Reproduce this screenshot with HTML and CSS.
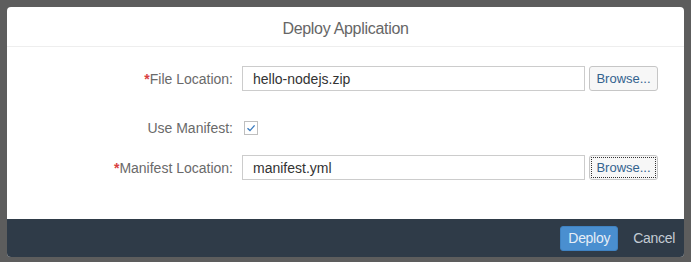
FILE: index.html
```html
<!DOCTYPE html>
<html>

<head>
  <link rel="stylesheet" href="styles.css">
</head>

<body>

  <div class="dialog">
    <div class="dialog-header">Deploy Application</div>

    <div class="dialog-body">
      <div class="form-row first">
        <label class="form-label" for="file-location"><span class="required">*</span>File Location:</label>
        <input class="form-input" id="file-location" type="text" value="hello-nodejs.zip">
        <button class="browse-button">Browse...</button>
      </div>

      <div class="form-row check-row">
        <label class="form-label" for="use-manifest">Use Manifest:</label>
        <span class="checkbox" id="use-manifest">
          <svg width="10" height="10" viewBox="0 0 10 10">
            <path d="M1.5 5.2 L4 7.6 L8.6 2.4" fill="none" stroke="#3b7cc0" stroke-width="1.4" />
          </svg>
        </span>
      </div>

      <div class="form-row">
        <label class="form-label" for="manifest-location"><span class="required">*</span>Manifest Location:</label>
        <input class="form-input" id="manifest-location" type="text" value="manifest.yml">
        <button class="browse-button focused">Browse...</button>
      </div>
    </div>

    <div class="dialog-footer">
      <button class="deploy-button">Deploy</button>
      <button class="cancel-button">Cancel</button>
    </div>
  </div>

</body>

</html>
```

FILE: styles.css
```css
body {
  margin: 0;
  background-color: #5d5d5d;
  font-family: "Liberation Sans", Arial, sans-serif;
}

.dialog {
  margin: 7px;
  width: 677px;
  height: 250px;
  background-color: white;
  border-radius: 4px;
  overflow: hidden;
  display: flex;
  flex-direction: column;
}

.dialog-header {
  height: 39px;
  line-height: 44px;
  text-align: center;
  font-size: 16px;
  letter-spacing: -0.3px;
  color: #666;
  border-bottom: 1px solid #eeeeee;
}

.dialog-body {
  flex: 1;
}

.form-row {
  display: flex;
  align-items: center;
  height: 25px;
  margin-top: 20px;
}

.form-row.first {
  margin-top: 19px;
}

.form-row.check-row {
  height: 14px;
  margin-top: 30px;
}

.form-label {
  width: 226px;
  margin-right: 9px;
  text-align: right;
  font-size: 14px;
  color: #6a6a6a;
}

.required {
  color: #d9413f;
  font-weight: bold;
}

.form-input {
  box-sizing: border-box;
  width: 343px;
  height: 25px;
  margin: 0;
  padding: 0 10px;
  border: 1px solid #cccccc;
  border-radius: 0;
  font-family: inherit;
  font-size: 14px;
  color: #333;
  outline: none;
}

.browse-button {
  box-sizing: border-box;
  width: 69px;
  height: 25px;
  margin-left: 4px;
  padding: 0;
  background-color: #f7f7f7;
  border: 1px solid #c6c6c6;
  border-radius: 3px;
  font-family: inherit;
  font-size: 13px;
  color: #33628e;
}

.browse-button.focused {
  outline: 1px dotted #333;
  outline-offset: -3px;
}

.checkbox {
  box-sizing: border-box;
  display: flex;
  align-items: center;
  justify-content: center;
  width: 14px;
  height: 14px;
  margin-left: 2px;
  border: 1px solid #bfbfbf;
  background-color: white;
}

.dialog-footer {
  height: 38px;
  background-color: #2f3b48;
  display: flex;
  align-items: center;
  justify-content: flex-end;
  padding-right: 9px;
}

.deploy-button {
  width: 58px;
  height: 25px;
  padding: 0;
  background-color: #4a8fd0;
  border: 1px solid #3f82c2;
  border-radius: 3px;
  font-family: inherit;
  font-size: 14px;
  letter-spacing: -0.3px;
  color: #e6eef7;
}

.cancel-button {
  margin-left: 15px;
  padding: 0;
  background: none;
  border: none;
  font-family: inherit;
  font-size: 14px;
  letter-spacing: -0.3px;
  color: #c3cbd4;
}
```
